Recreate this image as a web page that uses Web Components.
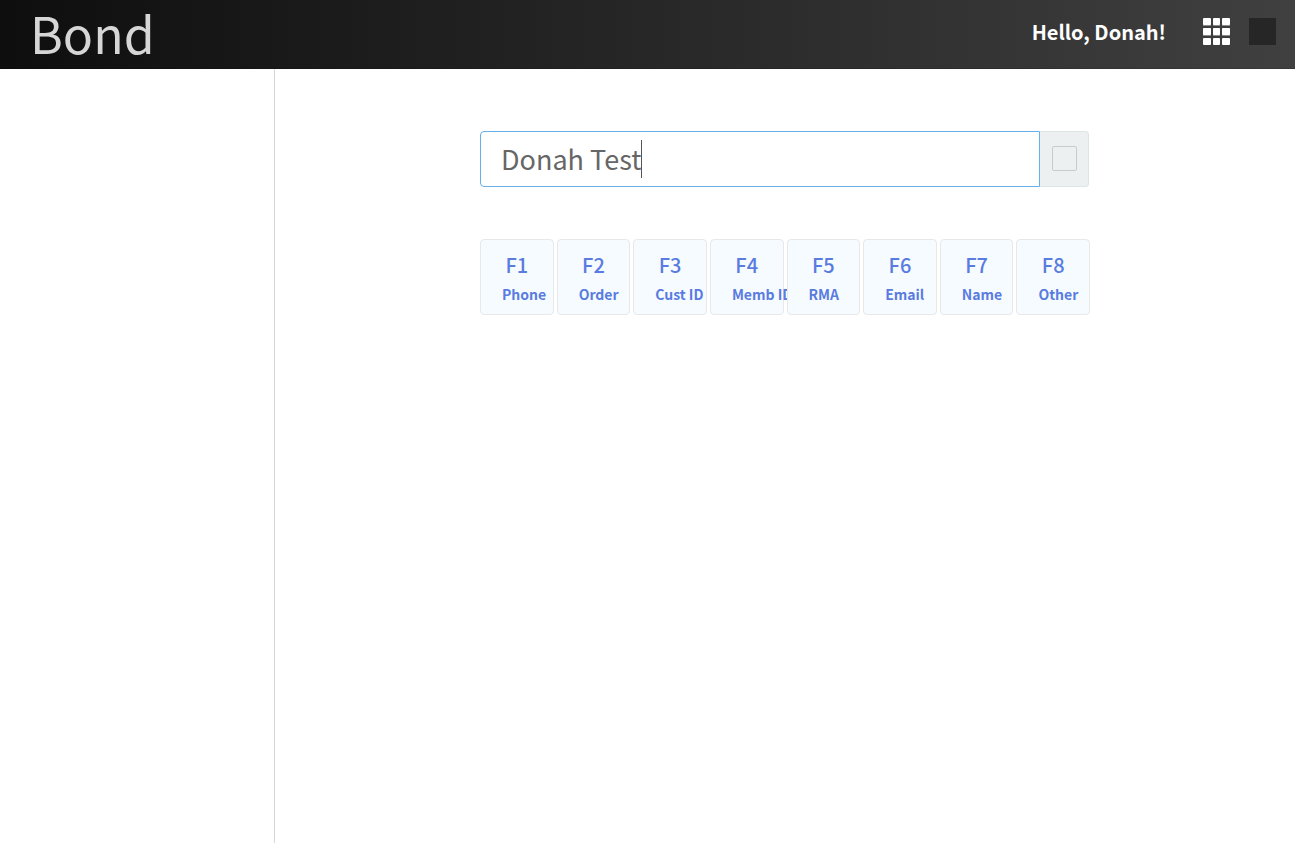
<!DOCTYPE html>
<html lang="en">
<head>
<meta charset="utf-8">
<title>Bond</title>
<style>
html,body{height:100%}
body{margin:0;background:#fff;font-family:"Noto Sans CJK SC","Open Sans",sans-serif}
</style>
</head>
<body>
<bond-app></bond-app>
<script>
const define=(name,html,setup)=>customElements.define(name,class extends HTMLElement{
  connectedCallback(){
    if(this.shadowRoot)return;
    const t=document.createElement('template');
    t.innerHTML=html;
    this.attachShadow({mode:'open'}).append(t.content.cloneNode(true));
    if(setup)setup(this,this.shadowRoot);
  }
});

define('bond-header',`
<style>
:host{display:block}
header{box-sizing:border-box;height:69px;display:flex;align-items:center;gap:19px;padding:0 19px 6px 30px;background:linear-gradient(to right,#0e0e0e,#404040);border-bottom:1px solid rgba(0,0,0,.12)}
h1{margin:0 auto 0 0;padding-top:2px;font-size:50px;line-height:60px;font-weight:400;color:#d6d6d6}
.hello{font-size:20px;line-height:28px;font-weight:700;color:#fff;margin-right:18px;padding-top:2px}
button{width:27px;height:27px;padding:0;border:0;background:none;display:block}
.user{background:#262626}
svg{display:block}
</style>
<header>
  <h1>Bond</h1>
  <span class="hello"><slot></slot></span>
  <button aria-label="Apps"><svg width="27" height="27" viewBox="0 0 27 27">
    <g fill="#8a8a8a"><rect y="1" width="8" height="7"/><rect x="10" y="1" width="7" height="7"/><rect x="19" y="1" width="8" height="7"/>
    <rect y="10" width="8" height="8"/><rect x="10" y="10" width="7" height="8"/><rect x="19" y="10" width="8" height="8"/></g>
    <g fill="#fff"><rect width="8" height="7" rx="1"/><rect x="10" width="7" height="7" rx="1"/><rect x="19" width="8" height="7" rx="1"/>
    <rect y="10" width="8" height="7" rx="1"/><rect x="10" y="10" width="7" height="7" rx="1"/><rect x="19" y="10" width="8" height="7" rx="1"/>
    <rect y="20" width="8" height="7" rx="1"/><rect x="10" y="20" width="7" height="7" rx="1"/><rect x="19" y="20" width="8" height="7" rx="1"/></g></svg></button>
  <button class="user" aria-label="Account"></button>
</header>`);

define('bond-search',`
<style>
:host{display:block}
form{display:flex;height:56px}
.field{position:relative;flex:1;min-width:0}
input{box-sizing:border-box;width:100%;height:100%;margin:0;padding:0 20px 2px;border:1px solid #66afe9;border-radius:4px 0 0 4px;background:#fff;outline:0;color:#666;font:400 27px "Noto Sans CJK SC","Open Sans",sans-serif;caret-color:transparent}
.caret{position:absolute;left:161px;top:9px;width:1px;height:38px;background:#555}
button{box-sizing:border-box;width:49px;padding:0 0 2px;display:grid;place-items:center;background:#ecf0f1;border:1px solid #dce4e6;border-left:0;border-radius:0 4px 4px 0}
i{box-sizing:border-box;width:25px;height:25px;border:1px solid #c8cccd;border-radius:2px}
</style>
<form>
  <div class="field"><input type="text" aria-label="Search" value="Donah Test"><span class="caret"></span></div>
  <button type="button" aria-label="Search"><i></i></button>
</form>`);

define('bond-key',`
<style>
:host{display:block;min-width:0}
button{box-sizing:border-box;width:100%;height:76px;margin:0;padding:11px 0 0;display:flex;flex-direction:column;justify-content:flex-start;align-items:stretch;background:#f5fbff;border:1px solid #e8e8e8;border-radius:4px;color:#5a7bdf;font-family:inherit;position:relative}
b{font-size:20px;line-height:28px;font-weight:500;text-align:center}
span{padding-left:21px;margin-top:4px;font-size:14px;line-height:22px;font-weight:700;white-space:nowrap;text-align:left}
</style>
<button type="button"><b></b><span><slot></slot></span></button>`,
(el,root)=>{root.querySelector('b').textContent=el.getAttribute('key')});

define('bond-app',`
<style>
:host{min-height:100vh;display:flex;flex-direction:column}
.body{flex:1;display:grid;grid-template-columns:275px 1fr}
aside{border-right:1px solid #d6d6d6}
main{padding:62px 20px}
.col{max-width:610px;margin:0 auto}
bond-search{margin-right:1px}
.keys{display:grid;grid-template-columns:repeat(8,minmax(0,1fr));gap:3px;margin-top:52px}
</style>
<bond-header>Hello, Donah!</bond-header>
<div class="body"><aside></aside><main><div class="col">
<bond-search></bond-search>
<div class="keys">
<bond-key key="F1">Phone</bond-key><bond-key key="F2">Order</bond-key><bond-key key="F3">Cust ID</bond-key><bond-key key="F4">Memb ID</bond-key><bond-key key="F5">RMA</bond-key><bond-key key="F6">Email</bond-key><bond-key key="F7">Name</bond-key><bond-key key="F8">Other</bond-key>
</div></div></main></div>`);
</script>
</body>
</html>
